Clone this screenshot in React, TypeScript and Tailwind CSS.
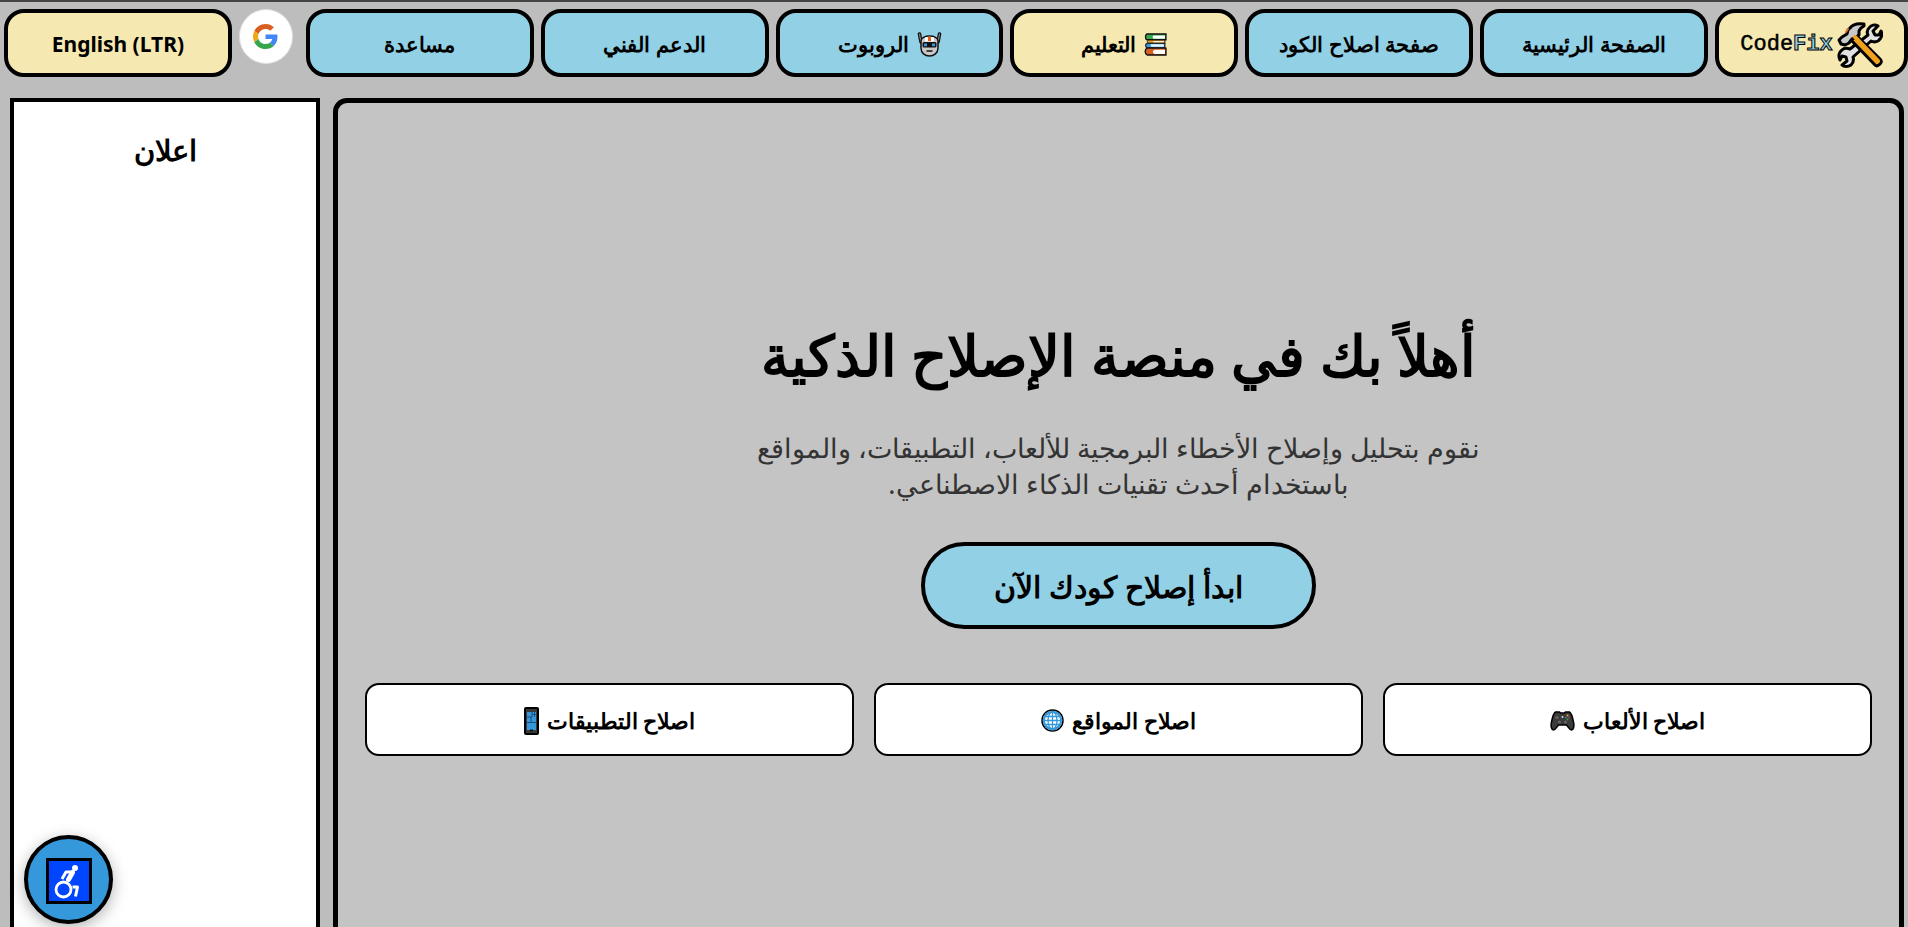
import type { ReactNode } from 'react';
import { clsx } from 'clsx';

function ToolsIcon() {
    return (
        <svg className="h-[46px] w-[46px] shrink-0" viewBox="0 0 46 46" fill="none" aria-hidden="true">
            {/* Wrench */}
            <path
                d="M32 6c2-3 6-4 9-2l-5 5 2 4 4 0 2-4c2 4 0 8-3 10-2 1-5 1-7 0L16 35c1 3 0 6-2 8-3 2-7 2-9 0l5-4-1-4-4-1-2 4c-2-4-1-8 2-10 2-2 5-2 8-1L31 13c-1-2-1-5 1-7z"
                fill="#e1e1e1"
                stroke="#000"
                strokeWidth="3"
                strokeLinejoin="round"
            />
            {/* Hammer */}
            <path d="M14 18l5-5 24 24c2 2 1 4 0 5-2 2-4 2-5 1L15 19z" fill="#f0a21c" stroke="#000" strokeWidth="3" strokeLinejoin="round" />
            <path
                d="M27 2c-6-1-11 0-14 4l-2 2-1 4-5 3-3 3 2 4 4 1 4-2 3-4 3-1 4-3 0-4c1-3 3-4 5-5z"
                fill="#c9c9c9"
                stroke="#000"
                strokeWidth="3"
                strokeLinejoin="round"
            />
            <path d="M11 7l-2 3" stroke="#e36f1e" strokeWidth="2" strokeLinecap="round" />
            <path d="M18 15l23 24" stroke="#f0a21c" strokeWidth="4" strokeLinecap="round" />
        </svg>
    );
}

function BooksIcon() {
    return (
        <svg className="h-[23px] w-[23px] shrink-0" viewBox="0 0 22 22" aria-hidden="true">
            {/* Green */}
            <path d="M3 1h18v5.500H3C1 6.500 1 1 3 1z" fill="#36a64c" stroke="#111" strokeWidth="1.300" />
            <path d="M9 2.500h11v3H9c-1-1-1-2 0-3z" fill="#fff" />
            {/* Yellow */}
            <path d="M4 6.800h16v3H4c-1-1-1-2 0-3z" fill="#f0a21c" stroke="#111" strokeWidth="0.800" />
            <path d="M9 7.800h10v1.200H9z" fill="#fff" />
            {/* Blue */}
            <path d="M3 9.800h17v4.400H3c-2-1-2-3.500 0-4.400z" fill="#3498db" stroke="#111" strokeWidth="1" />
            <path d="M7 10.800h12v2.400H7c-1-1-1-1.500 0-2.400z" fill="#e9f6fb" />
            {/* Orange */}
            <path d="M3 14.500h18V21H3c-2.500-1-2.500-5.500 0-6.500z" fill="#d95f20" stroke="#111" strokeWidth="1.300" />
            <path d="M10 16h10v4H10c-2-1-2-3 0-4z" fill="#fff" />
        </svg>
    );
}

function RobotIcon() {
    return (
        <svg className="h-[25px] w-[25px] shrink-0" viewBox="0 0 25 25" aria-hidden="true">
            {/* Antennae */}
            <path d="M2.500 2l1.500 8M22.500 2L21 10" stroke="#111" strokeWidth="3.600" strokeLinecap="round" />
            <path d="M2.500 2l1.500 8M22.500 2L21 10" stroke="#888" strokeWidth="1.200" strokeLinecap="round" />
            <path
                d="M4 9c0-3 4-5 8.500-5S21 6 21 9v7c0 5-4 8-8.500 8S4 21 4 16z"
                fill="#c9c9c9"
                stroke="#111"
                strokeWidth="1.500"
            />
            <path d="M8 5.500c3-1 6-1 9 0v4H8z" fill="#fff" />
            <path d="M11 4.800h3V9h-3z" fill="#e0601c" />
            <rect x="5.500" y="10" width="14" height="5.500" rx="1.500" fill="#111" />
            <path d="M7 11.500h3v2.800H7zM15 11.500h3v2.800h-3z" fill="#3498db" />
            <path d="M9.500 19h6" stroke="#111" strokeWidth="1.500" />
        </svg>
    );
}

function GamepadIcon() {
    return (
        <svg className="h-[20px] w-[25px] shrink-0" viewBox="0 0 24 20" aria-hidden="true">
            <path
                d="M5 1h4l1 1h4l1-1h4c2 1 3 5 4 10 1 4 0 8-2 8-2 0-3-3-5-5H8c-2 2-3 5-5 5-2 0-3-4-2-8C2 6 3 2 5 1z"
                fill="#3b3b3b"
                stroke="#000"
                strokeWidth="1.500"
            />
            <circle cx="6.500" cy="6.500" r="1.500" fill="#666" />
            <circle cx="9" cy="11" r="1.500" fill="#666" />
            <circle cx="15" cy="11" r="1.500" fill="#666" />
            <circle cx="12" cy="6" r="1" fill="#ddd" />
            <circle cx="17" cy="4.500" r="1" fill="#f0a21c" />
            <circle cx="15.500" cy="6.500" r="0.800" fill="#3498db" />
            <circle cx="18.500" cy="6.500" r="0.800" fill="#d94a2b" />
            <circle cx="17" cy="8.500" r="0.900" fill="#36a64c" />
        </svg>
    );
}

function GlobeIcon() {
    return (
        <svg className="h-[23px] w-[23px] shrink-0" viewBox="0 0 23 23" fill="none" aria-hidden="true">
            <circle cx="11.500" cy="11.500" r="10.500" fill="#fff" stroke="#000" strokeWidth="1.500" />
            <circle cx="11.500" cy="11.500" r="8.700" stroke="#3498db" strokeWidth="2.200" />
            <ellipse cx="11.500" cy="11.500" rx="4.500" ry="8.700" stroke="#3498db" strokeWidth="1.300" />
            <path d="M11.500 3v17M3 11.500h17M4 7.500h15M4 15.500h15" stroke="#3498db" strokeWidth="1.300" />
        </svg>
    );
}

function PhoneIcon() {
    return (
        <svg className="h-[28px] w-[15px] shrink-0" viewBox="0 0 15 28" aria-hidden="true">
            <rect x="1" y="1" width="13" height="26" rx="1" fill="#3a3a3a" stroke="#000" strokeWidth="2" />
            <path d="M3 5h9v18H3z" fill="#3498db" />
            <path d="M3 10h5M8 5v5M10.500 5v5M8 7.500h4M3 15.500h9M7 10v5" stroke="#1b4f78" />
            <path d="M6 23.500h3" stroke="#111" strokeWidth="2" />
        </svg>
    );
}

function GoogleIcon() {
    return (
        <svg className="h-[25px] w-[25px]" viewBox="0 0 48 48" aria-hidden="true">
            <path fill="#d95f20" d="M24 9.500c3.500 0 6.700 1.200 9.200 3.600l6.900-6.900C35.900 2.400 30.500 0 24 0 14.600 0 6.500 5.400 2.600 13.200l8 6.200C12.400 13.700 17.700 9.500 24 9.500z" />
            <path fill="#4285f4" d="M47 24.600c0-1.600-.2-3.100-.4-4.600H24v9h12.900c-.6 3-2.300 5.500-4.800 7.200l7.700 6C44.400 38 47 31.800 47 24.600z" />
            <path fill="#f0a81a" d="M10.500 28.600c-.5-1.500-.8-3-.8-4.600s.3-3.100.8-4.600l-8-6.200C.9 16.500 0 20.100 0 24s.9 7.500 2.600 10.800z" />
            <path fill="#36a64c" d="M24 48c6.500 0 11.900-2.100 15.900-5.800l-7.700-6c-2.200 1.500-4.900 2.300-8.200 2.300-6.300 0-11.600-4.200-13.500-9.900l-8 6.200C6.500 42.600 14.600 48 24 48z" />
        </svg>
    );
}

function AccessibilityIcon() {
    return (
        <svg className="h-[46px] w-[46px]" viewBox="0 0 46 46" fill="none" aria-hidden="true">
            <rect x="1.500" y="1.500" width="43" height="43" fill="#0046ff" stroke="#000" strokeWidth="3" />
            <circle cx="29" cy="10" r="3" fill="#fff" />
            <path d="M16 21l4-7h7" stroke="#fff" strokeWidth="3" strokeLinejoin="round" />
            <path d="M26.500 14.500l-4 7" stroke="#fff" strokeWidth="5" strokeLinecap="round" />
            <circle cx="17.500" cy="31.500" r="7.500" stroke="#fff" strokeWidth="2.800" />
            <path d="M26.500 29h5l-2 9.500" stroke="#fff" strokeWidth="3" strokeLinejoin="round" />
        </svg>
    );
}

type NavItem = {
    label: string;
    icon?: ReactNode;
    cream?: boolean;
};

const navItems: NavItem[] = [
    { label: 'الصفحة الرئيسية' },
    { label: 'صفحة اصلاح الكود' },
    { label: 'التعليم', icon: <BooksIcon />, cream: true },
    { label: 'الروبوت', icon: <RobotIcon /> },
    { label: 'الدعم الفني' },
    { label: 'مساعدة' },
];

const services = [
    { label: 'اصلاح الألعاب', icon: <GamepadIcon /> },
    { label: 'اصلاح المواقع', icon: <GlobeIcon /> },
    { label: 'اصلاح التطبيقات', icon: <PhoneIcon /> },
];

function NavButton({ label, icon, cream }: NavItem) {
    return (
        <button
            type="button"
            className={clsx(
                'flex h-[68px] min-w-0 flex-1 items-center justify-center gap-2 rounded-[20px] border-4 border-black pt-[3px] text-[21px] font-bold',
                cream ? 'bg-[#f5e8b0]' : 'bg-[#92d0e5]'
            )}
        >
            {icon}
            {label}
        </button>
    );
}

export default function App() {
    return (
        <div
            dir="rtl"
            className="flex min-h-screen flex-col border-t-2 border-[#444444] bg-[#bdbdbd] font-['Noto_Sans',sans-serif] text-black"
        >
            <nav className="flex items-start gap-[7px] pt-[7px] pl-1">
                <a
                    href="#"
                    dir="ltr"
                    className="flex h-[68px] w-[193px] shrink-0 items-center justify-center gap-1 rounded-[20px] border-4 border-black bg-[#f5e8b0] pt-[3px]"
                >
                    <span className="font-['Courier_New','Liberation_Mono',monospace] text-[22px]">
                        <span className="[-webkit-text-stroke:0.5px_#000]">Code</span>
                        <span className="font-bold text-[#92d0e5] [-webkit-text-stroke:1px_#000]">Fix</span>
                    </span>
                    <ToolsIcon />
                </a>
                {navItems.map((item) => (
                    <NavButton key={item.label} {...item} />
                ))}
                <button
                    type="button"
                    aria-label="Google"
                    className="mr-[6px] flex h-[55px] w-[54px] shrink-0 items-center justify-center rounded-full border border-[#dddddd] bg-white"
                >
                    <GoogleIcon />
                </button>
                <NavButton label="English (LTR)" cream />
            </nav>

            <div className="flex flex-1 gap-[13px] pt-[21px] pr-1 pl-[10px]">
                <main className="flex flex-1 flex-col items-center rounded-t-[14px] border-[5px] border-b-0 border-black bg-[#c4c4c4] px-[27px] pt-[211px]">
                    <h1 className="text-center text-[56px] leading-[80px] font-bold">أهلاً بك في منصة الإصلاح الذكية</h1>
                    <p className="mt-[36px] max-w-[750px] text-center text-[27px] leading-[36px] text-[#333333]">
                        نقوم بتحليل وإصلاح الأخطاء البرمجية للألعاب، التطبيقات، والمواقع باستخدام أحدث تقنيات الذكاء الاصطناعي.
                    </p>
                    <button
                        type="button"
                        className="mt-[40px] h-[87px] rounded-full border-4 border-black bg-[#92d0e5] px-[69px] pt-[2px] text-[30px] font-bold"
                    >
                        ابدأ إصلاح كودك الآن
                    </button>
                    <div className="mt-[54px] grid w-full grid-cols-3 gap-5">
                        {services.map((service) => (
                            <button
                                key={service.label}
                                type="button"
                                className="flex h-[73px] items-center justify-center gap-2 rounded-[14px] border-2 border-black bg-white pt-[2px] text-[22px] font-bold"
                            >
                                {service.label}
                                {service.icon}
                            </button>
                        ))}
                    </div>
                </main>

                <aside className="w-[310px] shrink-0 border-4 border-b-0 border-black bg-white pt-[28px] text-center">
                    <h2 className="text-[29px] leading-[40px] font-bold">اعلان</h2>
                </aside>
            </div>

            {/* Floating accessibility button */}
            <button
                type="button"
                aria-label="إمكانية الوصول"
                className="fixed bottom-[3px] left-6 flex h-[89px] w-[89px] items-center justify-center rounded-full border-4 border-black bg-[#3498db] pt-[3px] shadow-[0_4px_15px_rgba(0,0,0,0.3)]"
            >
                <AccessibilityIcon />
            </button>
        </div>
    );
}
